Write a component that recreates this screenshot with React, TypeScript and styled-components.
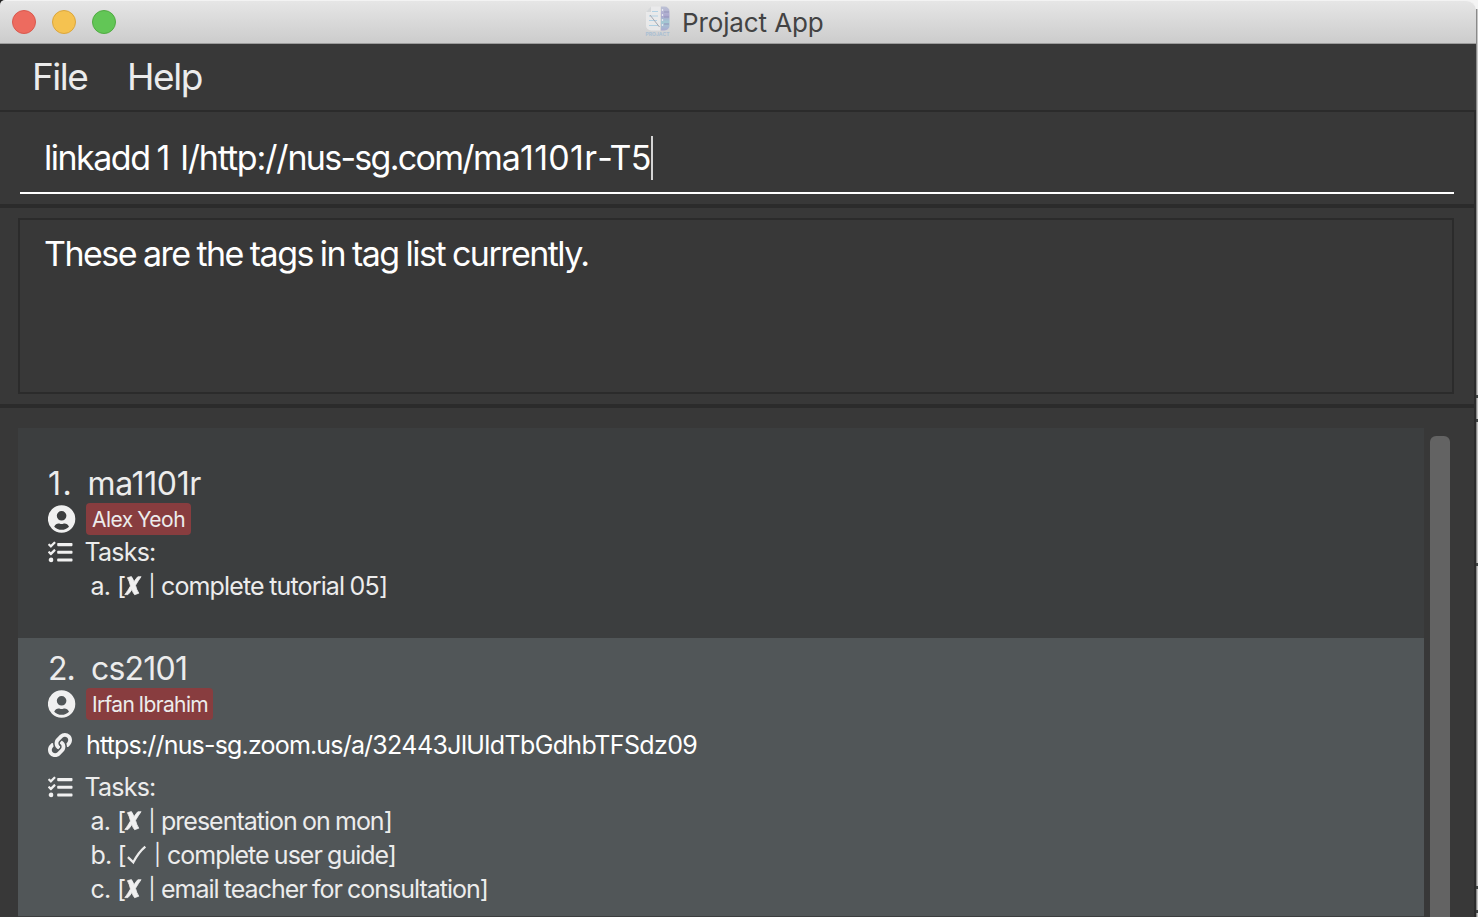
import React from 'react';
import styled, { createGlobalStyle } from 'styled-components';
import { FaLink, FaTasks } from 'react-icons/fa';

const Global = createGlobalStyle`
  * { box-sizing: border-box; }
  body { margin: 0; overflow: hidden; background: #c4c4c4; }
`;

const Screen = styled.div`
  display: flex;
  width: 1478px;
  height: 917px;
  overflow: hidden;
  background: linear-gradient(90deg, #202020 0 700px, #f4f4f4 700px);
  font-family: Inter, "Liberation Sans", sans-serif;
  color: #ececec;
`;

const Window = styled.div`
  width: 1476px;
  height: 917px;
  display: flex;
  flex-direction: column;
  flex: none;
`;

const DesktopEdge = styled.div`
  flex: 1;
  position: relative;
  margin-top: 9px;
  background: linear-gradient(90deg, #8a8a8a 50%, #c6c6c6 50%);
`;

const EdgeMark = styled.div<{ $y: number }>`
  position: absolute;
  left: 0;
  top: ${(p) => p.$y - 9}px;
  width: 2px;
  height: 3px;
  background: #3c4040;
`;

const TitleBar = styled.header`
  height: 44px;
  flex: none;
  display: flex;
  align-items: center;
  border-top: 1px solid #f3f3f3;
  border-bottom: 1px solid #9c9c9c;
  border-radius: 5px 10px 0 0;
  background: linear-gradient(#e6e6e6, #cccccc);
`;

const Lights = styled.div`
  display: flex;
  gap: 16px;
  padding-left: 12px;
  width: 645px;
`;

const Light = styled.i<{ $fill: string; $rim: string }>`
  width: 24px;
  height: 24px;
  border-radius: 50%;
  background: ${(p) => p.$fill};
  border: 1px solid ${(p) => p.$rim};
`;

const Text = styled.span<{ $size: number; $track?: number; $word?: number }>`
  font-size: ${(p) => p.$size}px;
  letter-spacing: ${(p) => p.$track ?? 0}px;
  word-spacing: ${(p) => p.$word ?? 0}px;
  white-space: pre;
`;

const Title = styled(Text)`
  margin-left: 12px;
  padding-top: 1px;
  color: #434343;
`;

const Body = styled.main`
  flex: 1;
  min-height: 0;
  display: flex;
  flex-direction: column;
  background: #383838;
`;

const MenuBar = styled.nav`
  height: 68px;
  flex: none;
  display: flex;
  padding-left: 32px;
  line-height: 66px;
  border-bottom: 2px solid #2b2b2b;
`;

const MenuItem = styled.div`
  width: 95px;
`;

const Pane = styled.section<{ $height?: number }>`
  flex: ${(p) => (p.$height ? 'none' : '1')};
  height: ${(p) => (p.$height ? `${p.$height}px` : 'auto')};
  min-height: 0;
  border-right: 2px solid #2b2b2b;
  border-bottom: ${(p) => (p.$height ? '4px solid #2b2b2b' : '0')};
`;

const CommandField = styled.div`
  height: 82px;
  margin: 0 20px;
  padding: 11px 0 0 24px;
  line-height: 70px;
  display: flex;
  border-bottom: 2px solid #fff;
  color: #fff;
`;

const Caret = styled.i`
  width: 2px;
  height: 44px;
  margin-top: 13px;
  background: #d4d4d4;
`;

const ResultPane = styled(Pane)`
  padding: 10px 20px 10px 18px;
`;

const ResultBox = styled.div`
  height: 176px;
  padding: 11px 0 0 24px;
  border: 2px solid #2b2b2b;
  line-height: 46px;
  color: #fff;
`;

const ListPane = styled(Pane)`
  padding: 20px 24px 0 18px;
  display: flex;
  justify-content: space-between;
`;

const List = styled.div`
  width: 1406px;
  background: #3c3e3f;
`;

const ScrollThumb = styled.div`
  width: 20px;
  margin-top: 8px;
  border-radius: 6px 6px 0 0;
  background: #636363;
`;

const Card = styled.article<{ $tone: string; $top: number; $height: number }>`
  height: ${(p) => p.$height}px;
  padding: ${(p) => p.$top}px 0 0 30px;
  background: ${(p) => p.$tone};
`;

const Heading = styled.div<{ $indexWidth: number }>`
  display: grid;
  grid-template-columns: ${(p) => p.$indexWidth}px auto;
  height: 39px;
  line-height: 40px;
`;

const Line = styled.div<{ $height: number; $label?: number }>`
  display: grid;
  grid-template-columns: ${(p) => p.$label ?? 38}px auto;
  align-items: center;
  justify-content: start;
  height: ${(p) => p.$height}px;
  line-height: ${(p) => p.$height}px;

  svg { display: block; color: #f0f0f0; }
`;

const Tag = styled.div<{ $width: number }>`
  width: ${(p) => p.$width}px;
  height: 32px;
  padding-left: 6px;
  border-radius: 4px;
  background: #883d3f;
  line-height: 34px;
`;

const Link = styled.div`
  display: flex;
  color: #fff;
`;

const TaskLine = styled.div<{ $wide?: boolean }>`
  display: grid;
  grid-template-columns: ${(p) => (p.$wide ? '27px 9.5px 27px 13px auto' : '26.5px 7px 24.5px 12.5px auto')};
  height: 34px;
  line-height: 34px;
  padding-left: 42.5px;

  svg { display: block; margin-top: 7px; }
`;

function UserIcon() {
  return (
    <svg width="28" height="28" viewBox="0 0 28 28">
      <path
        fill="currentColor"
        fillRule="evenodd"
        d="M13.6.3a13.7 13.7 0 1 0 0 27.4 13.7 13.7 0 0 0 0-27.4ZM13.6 6a4.8 4.8 0 1 1 0 9.6 4.8 4.8 0 0 1 0-9.6ZM6.2 21.7c1-2 2.600-3.100 4.400-3.100 1 0 1.700.5 3 .5s2-.5 3-.5c1.800 0 3.400 1.100 4.400 3.100-1.900 2.100-4.500 3.100-7.400 3.100s-5.500-1-7.400-3.100Z"
      />
    </svg>
  );
}

function Cross() {
  return (
    <svg width="18" height="20" viewBox="0 0 18 20">
      <path
        fill="#f0f0f0"
        stroke="#f0f0f0"
        strokeWidth=".8"
        strokeLinejoin="round"
        d="M3.400 1.700 7.400.6c1.100 1.500 1.900 3.300 2.600 5.200C11.300 3.900 12.500 2 13.800.8l3.300-.1C15.200 3.200 13.500 6 11.500 9.300c.8 3 1.800 5.700 3.300 7.900l-4.200 1.500c-1.200-1.500-2.100-3.200-2.700-5.200C6.500 15.700 5.200 17.400 3.900 18.600H.8C2.700 16.300 4.500 13.200 6.500 10 5.700 7 4.900 4 3.400 1.700Z"
      />
    </svg>
  );
}

function Check() {
  return (
    <svg width="20" height="20" viewBox="0 0 20 20">
      <path d="M.9 12.200 6.300 17.300C9.300 11.400 13.300 5.800 18.300 1.600" fill="none" stroke="#ececec" strokeWidth="2.300" />
    </svg>
  );
}

function Logo() {
  return (
    <svg width="25" height="32" viewBox="0 0 25 32" opacity="0.85">
      <defs>
        <linearGradient id="page" x1="0" y1="0" x2="0" y2="1">
          <stop offset="0" stopColor="#b7bdd3" />
          <stop offset=".4" stopColor="#a39fcd" />
          <stop offset=".65" stopColor="#9bc7d3" />
          <stop offset="1" stopColor="#a4a5d1" />
        </linearGradient>
      </defs>
      <path d="M6 .5h9v24H6a5 5 0 0 1-5-5V6Z" fill="#ececed" />
      <path d="M1 6 6 .5V6Z" fill="#d4d6d8" />
      <path d="M16 .5h3.500a5 5 0 0 1 5 5v14a5 5 0 0 1-5 5H16Z" fill="url(#page)" />
      <path d="M7 5.500h6M4 10h9M4 14.500h8M4 19.500h9" stroke="#a9cfe6" strokeWidth="1.200" />
      <path d="m5 9 9.500 12" stroke="#9c9faa" strokeWidth="1" />
      <path d="M17.500 3v20" stroke="#e4e7f1" strokeWidth="1.300" strokeDasharray="2 3" />
      <path d="M19 6h5M19 11h5M19 18h5" stroke="#8787b3" strokeWidth="1" />
      <text x="0.500" y="30" fontSize="5" fontWeight="700" textLength="24" fill="#a3bcd3" fontFamily="Inter, sans-serif">PROJACT</text>
    </svg>
  );
}

type Task = { id: string; done?: boolean; text: string; track: number };

function Tasks({ items }: { items: Task[] }) {
  return (
    <>
      <Line $height={34} $label={36.5}>
        <FaTasks size={24.5} />
        <Text $size={25} $track={-0.78}>Tasks:</Text>
      </Line>
      {items.map((t) => (
        <TaskLine key={t.id} $wide={t.done}>
          <Text $size={25} $track={-0.8}>{t.id}.</Text>
          <Text $size={25}>[</Text>
          {t.done ? <Check /> : <Cross />}
          <Text $size={21}>|</Text>
          <Text $size={25} $track={t.track} $word={-0.8}>{t.text}]</Text>
        </TaskLine>
      ))}
    </>
  );
}

export default function App() {
  return (
    <Screen>
      <Global />
      <Window>
        <TitleBar>
          <Lights>
            <Light $fill="#ed6b5f" $rim="#d9594e" />
            <Light $fill="#f5c250" $rim="#dba63d" />
            <Light $fill="#62c656" $rim="#51ab43" />
          </Lights>
          <Logo />
          <Title $size={26} $track={-0.12}>Projact App</Title>
        </TitleBar>
        <Body>
          <MenuBar>
            <MenuItem><Text $size={37} $track={-1.5}>File</Text></MenuItem>
            <MenuItem><Text $size={37} $track={-1.45}>Help</Text></MenuItem>
          </MenuBar>
          <Pane $height={96}>
            <CommandField>
              <Text $size={34} $track={-1.5} $word={-1}>{'linkadd '}</Text>
              <Text $size={34} $track={-0.9} $word={2.5}>{'1 '}</Text>
              <Text $size={34} $track={-1.15}>l/http://</Text>
              <Text $size={34} $track={-1.7}>nus-sg.com/</Text>
              <Text $size={34} $track={-0.9}>ma</Text>
              <Text $size={34} $track={0.3}>1101r</Text>
              <Text $size={34} $track={-0.8}>-T5</Text>
              <Caret />
            </CommandField>
          </Pane>
          <ResultPane $height={200}>
            <ResultBox>
              <Text $size={34} $track={-1.53} $word={-1.1}>These are the tags in tag list currently.</Text>
            </ResultBox>
          </ResultPane>
          <ListPane>
            <List>
              <Card $tone="#3c3e3f" $top={36} $height={210}>
                <Heading $indexWidth={39.5}>
                  <Text $size={32} $track={1.5}>1.</Text>
                  <Text $size={32} $track={-0.35}>ma1101r</Text>
                </Heading>
                <Line $height={32}>
                  <UserIcon />
                  <Tag $width={105}><Text $size={21} $track={-0.5} $word={-1}>Alex Yeoh</Text></Tag>
                </Line>
                <Tasks items={[{ id: 'a', text: 'complete tutorial 05', track: -0.85 }]} />
              </Card>
              <Card $tone="#515658" $top={11} $height={278}>
                <Heading $indexWidth={43}>
                  <Text $size={32} $track={-1}>2.</Text>
                  <Text $size={32} $track={-0.8}>cs2101</Text>
                </Heading>
                <Line $height={32}>
                  <UserIcon />
                  <Tag $width={127}><Text $size={21} $track={-0.65} $word={-1}>Irfan Ibrahim</Text></Tag>
                </Line>
                <Line $height={50}>
                  <FaLink size={24} />
                  <Link>
                    <Text $size={25} $track={-0.82}>https://nus-sg.zoom.us/a/</Text>
                    <Text $size={25} $track={-0.62}>32443JlUldTbGdhbTFSdz09</Text>
                  </Link>
                </Line>
                <Tasks
                  items={[
                    { id: 'a', text: 'presentation on mon', track: -1 },
                    { id: 'b', done: true, text: 'complete user guide', track: -1 },
                    { id: 'c', text: 'email teacher for consultation', track: -1 },
                  ]}
                />
              </Card>
            </List>
            <ScrollThumb />
          </ListPane>
        </Body>
      </Window>
      <DesktopEdge>
        {[395, 419, 563, 886, 910].map((y) => <EdgeMark key={y} $y={y} />)}
      </DesktopEdge>
    </Screen>
  );
}
